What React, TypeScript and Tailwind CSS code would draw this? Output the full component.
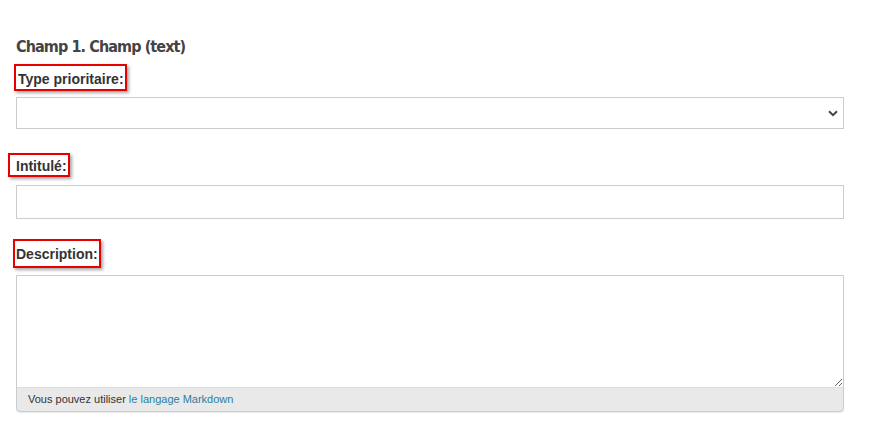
import type { ReactNode } from 'react'

function Marked({ children, box }: { children: ReactNode; box: string }) {
  return (
    <label className="relative inline-block text-[14px] font-bold leading-[18px] text-[#333]">
      <span
        className={`pointer-events-none absolute border-2 border-[#e60000] shadow-[2px_2px_3px_rgba(0,0,0,0.35)] ${box}`}
      />
      {children}
    </label>
  )
}

export default function App() {
  return (
    <div
      className="min-h-[447px] bg-white pl-4 pr-[36px] pt-[36px]"
      style={{ fontFamily: '"Liberation Sans", Arial, sans-serif' }}
    >
      <h3
        className="text-[16px] font-bold leading-[22px] tracking-[-0.9px] text-[#444]"
        style={{ fontFamily: '"DejaVu Sans Condensed", sans-serif' }}
      >
        Champ 1. Champ (text)
      </h3>

      <div className="mt-[9px] pl-[2px]">
        <Marked box="-left-[4px] -right-[3px] -top-[6px] -bottom-[3px]">Type prioritaire:</Marked>
      </div>
      <div className="relative mt-[6px] h-[32px] border border-[#ccc] bg-white">
        <svg
          className="absolute right-[5px] top-[12px]"
          width="10"
          height="7"
          viewBox="0 0 10 7"
        >
          <path d="M1 1.2 L5 5.2 L9 1.2" fill="none" stroke="#444" strokeWidth="2" />
        </svg>
      </div>

      <div className="mt-[25px]">
        <Marked box="-left-[8px] -right-[3px] -top-[4px] -bottom-[2px]">Intitulé:</Marked>
      </div>
      <div className="mt-[7px] h-[34px] border border-[#ccc] bg-white" />

      <div className="mt-[23px]">
        <Marked box="-left-[3px] -right-[3px] -top-[6px] -bottom-[5px]">Description:</Marked>
      </div>
      <div className="mt-[9px] rounded-b-sm border border-[#ccc] bg-[#e9e9e9] shadow-[0_1px_1px_rgba(0,0,0,0.08)]">
        <textarea className="block h-[112px] w-full resize-y border-0 border-b border-[#ddd] bg-white outline-none" />
        <div className="flex h-[23px] items-center pl-[11px] text-[11px] text-[#333]">
          <span>Vous pouvez utiliser</span>
          <span className="ml-[3px] text-[#2a7f9f]">le langage Markdown</span>
        </div>
      </div>
    </div>
  )
}
